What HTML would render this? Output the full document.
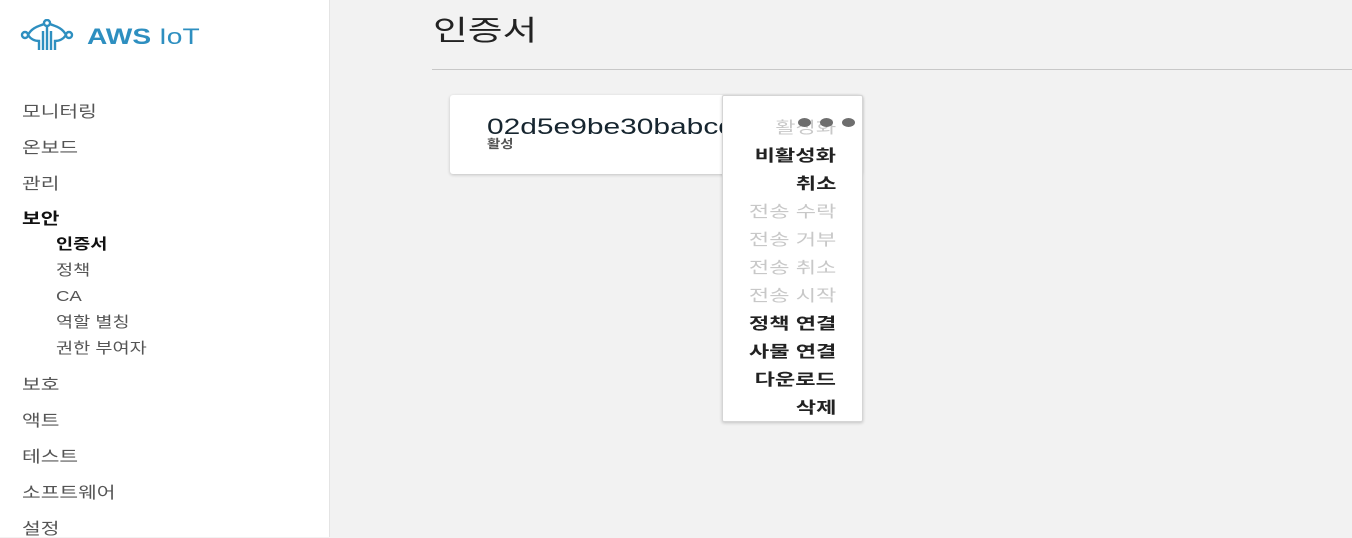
<!DOCTYPE html>
<html><head><meta charset="utf-8"><style>
*{margin:0;padding:0;box-sizing:border-box}
body{width:1352px;height:537px;overflow:hidden;background:#f2f2f2;font-family:"Liberation Sans","Noto Sans CJK KR",sans-serif;position:relative}
.side{position:absolute;left:0;top:0;width:330px;height:537px;background:#fff;border-right:1px solid #e4e4e4}
.t{position:absolute;white-space:nowrap;line-height:1;transform-origin:left center}
.nav{left:22px;font-size:16px;color:#555;transform:scaleX(1.27)}
.sub{left:56px;font-size:15px;color:#555;transform:scaleX(1.24)}
.menu{position:absolute;left:722px;top:95px;width:141px;height:327px;background:#fff;border:1px solid #d5d5d5;border-radius:2px;box-shadow:0 1px 3px rgba(0,0,0,.2);z-index:2}
.mi{position:absolute;right:26px;font-size:16px;font-weight:bold;color:#222;white-space:nowrap;line-height:1;transform:scaleX(1.38);transform-origin:right center}
.mi.d{color:#c8c8c8;font-weight:normal}
.dot{position:absolute;top:118px;width:13px;height:9px;border-radius:50%;background:#6e6e6e;z-index:3}
</style></head><body>
<div class="side">
<svg style="position:absolute;left:20px;top:19px" width="54" height="32" viewBox="0 0 54 32" fill="none" stroke="#2e8fc0" stroke-width="2.4">
<circle cx="27" cy="4" r="3"/><circle cx="5" cy="16" r="3"/><circle cx="49" cy="16" r="3"/>
<path d="M8 16 C12 8 20 7 24 5 M30 5 C34 7 42 8 46 16 M8 16 C12 22 17 22 19 22 V31 M46 16 C42 22 37 22 35 22 V31 M27 7 V31 M23 12 V31 M31 12 V31"/>
</svg>
<div class="t" style="left:87px;top:26px;font-size:22px;font-weight:bold;color:#2e8fc0;transform:scaleX(1.28)">AWS <span style="font-weight:normal">IoT</span></div>
<div class="t nav" style="top:105px">모니터링</div>
<div class="t nav" style="top:141px">온보드</div>
<div class="t nav" style="top:177px">관리</div>
<div class="t nav" style="top:212px;color:#111;font-weight:bold">보안</div>
<div class="t sub" style="top:237px;color:#111;font-weight:bold">인증서</div>
<div class="t sub" style="top:263px">정책</div>
<div class="t sub" style="top:289px">CA</div>
<div class="t sub" style="top:315px">역할 별칭</div>
<div class="t sub" style="top:341px">권한 부여자</div>
<div class="t nav" style="top:378px">보호</div>
<div class="t nav" style="top:414px">액트</div>
<div class="t nav" style="top:450px">테스트</div>
<div class="t nav" style="top:486px">소프트웨어</div>
<div class="t nav" style="top:522px">설정</div>
</div>
<div class="t" style="left:433px;top:17px;font-size:28px;color:#222;transform:scaleX(1.35)">인증서</div>
<div style="position:absolute;left:432px;top:69px;width:920px;height:1px;background:#c8c8c8"></div>
<div style="position:absolute;left:450px;top:95px;width:412px;height:79px;background:#fff;border-radius:3px;box-shadow:0 1px 3px rgba(0,0,0,.2)"></div>
<div class="t" style="left:487px;top:116px;font-size:22px;color:#16252f;transform:scaleX(1.36)">02d5e9be30babcdef</div>
<div class="t" style="left:487px;top:138px;font-size:12px;color:#555;font-weight:bold;transform:scaleX(1.2)">활성</div>
<div class="menu">
<div class="mi d" style="top:25px">활성화</div>
<div class="mi" style="top:53px">비활성화</div>
<div class="mi" style="top:81px">취소</div>
<div class="mi d" style="top:109px">전송 수락</div>
<div class="mi d" style="top:137px">전송 거부</div>
<div class="mi d" style="top:165px">전송 취소</div>
<div class="mi d" style="top:193px">전송 시작</div>
<div class="mi" style="top:221px">정책 연결</div>
<div class="mi" style="top:249px">사물 연결</div>
<div class="mi" style="top:277px">다운로드</div>
<div class="mi" style="top:305px">삭제</div>
</div>
<div class="dot" style="left:798px"></div>
<div class="dot" style="left:820px"></div>
<div class="dot" style="left:842px"></div>
</body></html>
